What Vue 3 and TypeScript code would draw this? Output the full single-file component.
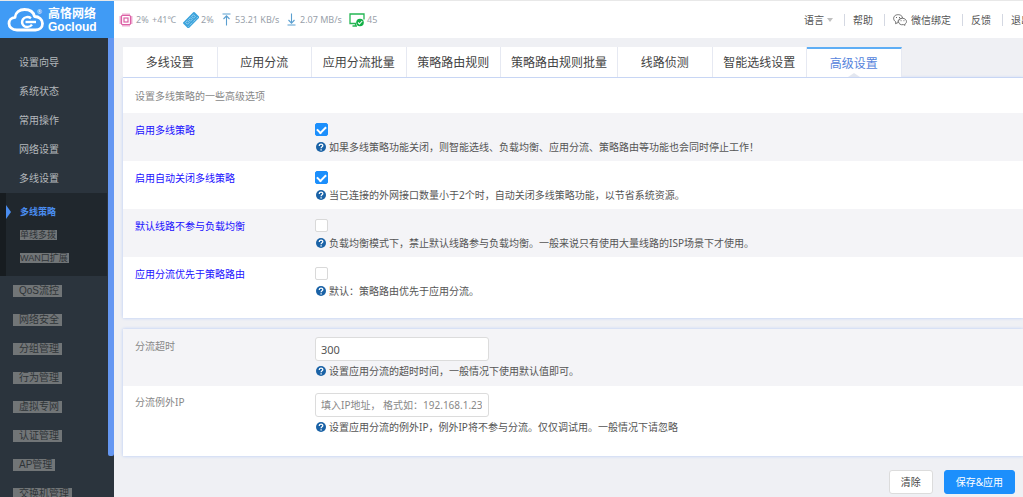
<script setup lang="ts">
import { ref } from 'vue'

interface Toggle {
  id: string
  label: string
  help: string
  on: boolean
}

const topMenu: string[] = ['设置向导', '系统状态', '常用操作', '网络设置', '多线设置']
const subMenu: string[] = ['多线策略', '单线多拨', 'WAN口扩展']
const restMenu: string[] = ['QoS流控', '网络安全', '分组管理', '行为管理', '虚拟专网', '认证管理', 'AP管理', '交换机管理']
const tabs: string[] = ['多线设置', '应用分流', '应用分流批量', '策略路由规则', '策略路由规则批量', '线路侦测', '智能选线设置', '高级设置']
const activeTab = ref('高级设置')

const toggles = ref<Toggle[]>([
  { id: 'enable', label: '启用多线策略', help: '如果多线策略功能关闭，则智能选线、负载均衡、应用分流、策略路由等功能也会同时停止工作！', on: true },
  { id: 'auto-off', label: '启用自动关闭多线策略', help: '当已连接的外网接口数量小于2个时，自动关闭多线策略功能，以节省系统资源。', on: true },
  { id: 'no-default', label: '默认线路不参与负载均衡', help: '负载均衡模式下，禁止默认线路参与负载均衡。一般来说只有使用大量线路的ISP场景下才使用。', on: false },
  { id: 'prefer-app', label: '应用分流优先于策略路由', help: '默认：策略路由优先于应用分流。', on: false },
])
const timeout = ref('300')
const exceptIp = ref('')
</script>

<template>
  <div class="page">
    <aside class="side">
      <a class="brand" href="#">
        <svg class="brand-mark" viewBox="0 0 38 26" aria-hidden="true">
          <path d="M10 23C5 23 2 20 2 16.500C2 13 4.500 10.500 8 10.300C8.500 5.500 12.500 2.500 17.500 2.500C22.500 2.500 26.500 5 27.500 9.500C32 9.500 35.500 12.500 35.500 16.500C35.500 20.500 32.500 23 28.500 23Z" fill="none" stroke="#fff" stroke-width="2.800" stroke-linejoin="round" />
          <path d="M24 11.300C21.500 9.300 17.500 9.800 15.800 12.500C13.800 15.900 16.300 20 20.300 20C22.600 20 24 19 25 17.600" fill="none" stroke="#fff" stroke-width="2.400" />
          <path d="M18.500 15H29" stroke="#fff" stroke-width="2.400" />
        </svg>
        <span class="reg">®</span>
        <span class="brand-text"><span class="brand-cn">高恪网络</span><span class="brand-en">Gocloud</span></span>
      </a>
      <div class="side-body">
        <nav class="menu">
          <ul>
            <li v-for="m in topMenu" :key="m" class="item"><a href="#">{{ m }}</a></li>
          </ul>
          <ul class="sub">
            <li v-for="(m, i) in subMenu" :key="m" :class="{ current: i === 0, marked: i > 0 }"><a href="#">{{ m }}</a></li>
          </ul>
          <ul>
            <li v-for="m in restMenu" :key="m" class="item marked"><a href="#">{{ m }}</a></li>
          </ul>
        </nav>
        <div class="scroll"></div>
      </div>
    </aside>

    <div class="main">
      <header class="top">
        <div class="stats">
          <svg class="chip" viewBox="0 0 14 14" aria-hidden="true">
            <g fill="none" stroke="#dc5fa5">
              <rect x="2.500" y="2.500" width="9" height="9" rx="1" stroke-width="1.200" />
              <rect x="5" y="5" width="4" height="4" stroke-width="1.200" />
              <path d="M4 0.500V2M6 0.500V2M8 0.500V2M10 0.500V2M4 12V13.500M6 12V13.500M8 12V13.500M10 12V13.500M0.500 4H2M0.500 6H2M0.500 8H2M0.500 10H2M12 4H13.500M12 6H13.500M12 8H13.500M12 10H13.500" />
            </g>
          </svg>
          <span class="stat pct">2%</span>
          <span class="stat temp">+41℃</span>
          <svg class="ram" viewBox="0 0 16 16" aria-hidden="true">
            <g transform="rotate(-45 8 8)">
              <rect x="0" y="4.200" width="16" height="8" rx="1" fill="#3ba3dc" />
              <path d="M2.500 6H5V8.500H2.500ZM6.700 6H9.200V8.500H6.700ZM11 6H13.500V8.500H11Z" fill="none" stroke="#c7e6f7" stroke-width="0.600" />
              <path d="M1.500 10.700H14.500" stroke="#c7e6f7" stroke-width="0.900" stroke-dasharray="1 1" />
            </g>
          </svg>
          <span class="stat mem">2%</span>
          <svg class="arrow" viewBox="0 0 9 13" aria-hidden="true"><path d="M0.500 1H8.500M4.500 12.500V3M1.500 6L4.500 2.800L7.500 6" fill="none" stroke="#5b9fd0" stroke-width="1.100" /></svg>
          <span class="stat up">53.21 KB/s</span>
          <svg class="arrow" viewBox="0 0 9 13" aria-hidden="true"><path d="M0.500 12H8.500M4.500 0.500V10M1.500 7L4.500 10.200L7.500 7" fill="none" stroke="#5b9fd0" stroke-width="1.100" /></svg>
          <span class="stat down">2.07 MB/s</span>
          <svg class="screen" viewBox="0 0 16 14" aria-hidden="true">
            <path d="M7 10.500H1V1H15V6.500M6.500 10.500V13M3.500 13H8" fill="none" stroke="#25b653" stroke-width="1.300" />
            <circle cx="11" cy="9.500" r="3.800" fill="#12b046" />
            <path d="M9 9.500L10.500 11L13.200 8" fill="none" stroke="#fff" stroke-width="1.100" />
          </svg>
          <span class="stat">45</span>
        </div>
        <nav class="links">
          <a href="#">语言<i class="caret"></i></a>
          <a href="#">帮助</a>
          <a href="#">
            <svg class="wechat" viewBox="0 0 14 12" aria-hidden="true">
              <path d="M5.200 8.500L2.500 9.700L2.900 8C-0.300 6 0 2 3.200 1C6 0 9.300 1.200 9.700 4.200C6.800 4 4.500 6 5.200 8.500Z" fill="none" stroke="#666" stroke-width="0.900" />
              <path d="M11.800 10L12 11.300L10.400 10.600C7.800 11.300 5.500 9.700 5.500 7.700C5.500 5.500 7.400 4.300 9.500 4.300C11.600 4.300 13.500 5.700 13.500 7.700C13.500 8.700 12.800 9.500 11.800 10Z" fill="#fff" stroke="#666" stroke-width="0.900" />
              <path d="M3 3.500H4M6 3.500H7M7.600 6.700H8.500M10.500 6.700H11.400" stroke="#666" />
            </svg>微信绑定</a>
          <a href="#">反馈</a>
          <a href="#">退出</a>
        </nav>
      </header>

      <div class="content">
        <div class="tabs" role="tablist">
          <button v-for="t in tabs" :key="t" type="button" role="tab" class="tab" :class="{ active: t === activeTab, wide: t.length > 6 }" :aria-selected="t === activeTab" @click="activeTab = t">{{ t }}</button>
        </div>

        <section class="panel first">
          <p class="intro">设置多线策略的一些高级选项</p>
          <div v-for="t in toggles" :key="t.id" class="row">
            <label class="name strong" :for="t.id">{{ t.label }}</label>
            <div class="field">
              <input :id="t.id" v-model="t.on" class="check" type="checkbox" />
              <p class="help">
                <svg class="q" viewBox="0 0 10 10" aria-hidden="true"><circle cx="5" cy="5" r="5" fill="#1a62a6" /><path d="M3.200 4C3.200 1.500 6.800 1.600 6.800 3.700C6.800 4.900 5.100 4.800 5.100 6.300M5.100 7.200V8.500" fill="none" stroke="#fff" stroke-width="1.300" /></svg>{{ t.help }}
              </p>
            </div>
          </div>
        </section>

        <section class="panel second">
          <div class="row">
            <label class="name" for="timeout">分流超时</label>
            <div class="field">
              <input id="timeout" v-model="timeout" class="text value" type="text" />
              <p class="help">
                <svg class="q" viewBox="0 0 10 10" aria-hidden="true"><circle cx="5" cy="5" r="5" fill="#1a62a6" /><path d="M3.200 4C3.200 1.500 6.800 1.600 6.800 3.700C6.800 4.900 5.100 4.800 5.100 6.300M5.100 7.200V8.500" fill="none" stroke="#fff" stroke-width="1.300" /></svg>设置应用分流的超时时间，一般情况下使用默认值即可。
              </p>
            </div>
          </div>
          <div class="row">
            <label class="name" for="except">分流例外IP</label>
            <div class="field">
              <input id="except" v-model="exceptIp" class="text" type="text" placeholder="填入IP地址， 格式如：192.168.1.234" />
              <p class="help">
                <svg class="q" viewBox="0 0 10 10" aria-hidden="true"><circle cx="5" cy="5" r="5" fill="#1a62a6" /><path d="M3.200 4C3.200 1.500 6.800 1.600 6.800 3.700C6.800 4.900 5.100 4.800 5.100 6.300M5.100 7.200V8.500" fill="none" stroke="#fff" stroke-width="1.300" /></svg>设置应用分流的例外IP，例外IP将不参与分流。仅仅调试用。一般情况下请忽略
              </p>
            </div>
          </div>
        </section>

        <div class="actions">
          <button type="button" class="btn">清除</button>
          <button type="button" class="btn primary">保存&amp;应用</button>
        </div>
      </div>
    </div>
  </div>
</template>

<style>
body {
  background: #eff0f4;
}
</style>

<style scoped>
* {
  box-sizing: border-box;
}
.page {
  display: flex;
  height: 100vh;
  overflow: hidden;
  border-top: 1px solid #e8e8e8;
  font: 10px/14px "Noto Sans", "Noto Sans CJK SC", sans-serif;
  color: #555;
}
ul,
p {
  margin: 0;
  padding: 0;
  list-style: none;
}
a {
  color: inherit;
  text-decoration: none;
}
.side {
  flex: none;
  width: 114px;
  display: flex;
  flex-direction: column;
  background: #2b343d;
}
.brand {
  flex: none;
  display: flex;
  height: 37px;
  padding: 6px 0 0 7px;
  background: #409bf5;
  color: #fff;
}
.brand-mark {
  width: 38px;
  height: 26px;
}
.reg {
  margin-left: -8px;
  width: 11px;
  font-size: 6px;
  line-height: 10px;
}
.brand-text {
  display: flex;
  flex-direction: column;
  font-weight: 700;
}
.brand-cn {
  font-size: 12px;
  line-height: 14px;
}
.brand-en {
  font-family: "Liberation Sans", Arial, sans-serif;
  font-size: 12px;
  line-height: 12px;
}
.side-body {
  flex: 1;
  display: flex;
  min-height: 0;
}
.menu {
  flex: 1;
  padding-top: 10px;
  overflow: hidden;
  font-family: "Liberation Sans", "Noto Sans CJK SC", sans-serif;
  color: #b4b8bc;
}
.scroll {
  width: 6px;
  height: 418px;
  background: #6597f2;
  border-radius: 0 0 2px 2px;
}
.item {
  display: flex;
  align-items: center;
  height: 29px;
  padding-left: 13px;
}
.item a {
  padding: 0 3px 0 6px;
  line-height: 12px;
}
.marked a {
  background: #717577;
  color: #2f3437;
}
.sub {
  margin-right: 1px;
  padding: 7px 0 7px;
  border-left: 6px solid #171c20;
  background: #20272d;
  font-size: 9px;
}
.sub li {
  display: flex;
  align-items: center;
  height: 23px;
  padding-left: 14px;
}
.sub a {
  padding-right: 1px;
  line-height: 10px;
}
.sub .current {
  padding-left: 0;
  color: #4a8df0;
  font-weight: 700;
}
.current::before {
  content: "";
  margin-right: 9px;
  border: solid transparent;
  border-width: 7px 0 7px 5px;
  border-left-color: #4a8df0;
}
.main {
  flex: 1;
  min-width: 0;
  display: flex;
  flex-direction: column;
  background: #eff0f4;
}
.top {
  flex: none;
  display: flex;
  align-items: center;
  height: 37px;
  padding-left: 5px;
  background: #fff;
  overflow: hidden;
}
.stats {
  flex: none;
  display: flex;
  align-items: center;
  font-size: 9px;
  color: #999faa;
}
.stat {
  flex: none;
  white-space: nowrap;
}
.chip {
  width: 14px;
  height: 14px;
  margin-right: 3px;
}
.pct {
  width: 16px;
}
.temp {
  width: 31px;
}
.ram {
  width: 16px;
  height: 16px;
  margin-right: 2px;
}
.mem {
  width: 21px;
}
.arrow {
  width: 9px;
  height: 13px;
  margin-right: 4px;
}
.up {
  width: 52px;
}
.down {
  width: 49px;
}
.screen {
  width: 16px;
  height: 14px;
  margin-right: 2px;
}
.links {
  flex: none;
  display: flex;
  margin: 0 -8px 0 auto;
}
.links a {
  display: flex;
  align-items: center;
  height: 12px;
}
.links a + a {
  margin-left: 11px;
  padding-left: 8px;
  border-left: 1px solid #d4d8e2;
}
.caret {
  margin-left: 3px;
  border: solid transparent;
  border-width: 4px 3px 0;
  border-top-color: #c0c0c0;
}
.wechat {
  width: 14px;
  height: 12px;
  margin-right: 4px;
}
.content {
  flex: 1;
  padding: 9px 0 0 9px;
}
.tabs {
  display: flex;
  height: 31px;
  border-bottom: 1px solid #d5dff2;
}
.tab {
  flex: 0 0 auto;
  width: 10.5%;
  padding: 2px 0 0;
  border: 0;
  border-right: 1px solid #e6e9f2;
  background: #fff;
  font: inherit;
  font-size: 12px;
  color: #444;
  white-space: nowrap;
}
.tab.wide {
  width: 13%;
}
.tab.active {
  display: flex;
  flex-direction: column;
  align-items: center;
  justify-content: space-between;
  border-top: 2px solid #5eaef5;
  color: #5583dc;
  line-height: 18px;
  padding-top: 6px;
}
.tab.active::after {
  content: "";
  border: solid transparent;
  border-width: 0 6px 4px;
  border-bottom-color: #e3e7f0;
}
.panel {
  background: #fff;
  box-shadow: 0 0 3px #b4c9f7;
}
.first {
  padding-bottom: 13px;
}
.intro {
  height: 35px;
  padding: 11px 12px;
  color: #888;
}
.row {
  display: flex;
  min-height: 48px;
  padding: 10px 12px 0;
}
.row:nth-of-type(odd) {
  background: #f4f4f7;
}
.name {
  flex: none;
  width: 180px;
  color: #888;
}
.strong {
  color: #1a10ff;
}
.field {
  flex: 1;
  min-width: 0;
}
.check {
  appearance: none;
  display: grid;
  place-items: center;
  width: 13px;
  height: 13px;
  margin: 0 0 4px;
  border: 1px solid #d9d9d9;
  border-radius: 2px;
  background: #fff;
}
.check:checked {
  border-color: #1c8ffc;
  background: #1c8ffc;
}
.check:checked::after {
  content: "";
  width: 7px;
  height: 4px;
  margin-bottom: 2px;
  border: solid #fff;
  border-width: 0 0 2px 2px;
  rotate: -45deg;
}
.help {
  display: flex;
  align-items: center;
  white-space: nowrap;
}
.q {
  flex: none;
  width: 10px;
  height: 10px;
  margin: 0 3px 0 1px;
}
.second {
  margin-top: 11px;
}
.second .row {
  min-height: 57px;
  padding-top: 8px;
}
.second .row:last-child {
  min-height: 70px;
  padding-top: 7px;
}
.second .name {
  padding-top: 2px;
}
.text {
  display: block;
  width: 174px;
  height: 24px;
  margin-bottom: 3px;
  padding: 0 6px 0 5px;
  border: 1px solid #dcdcdc;
  border-radius: 3px;
  background: #fff;
  font: inherit;
  color: #555;
}
.value {
  font-size: 11px;
}
.text::placeholder {
  color: #888;
}
.actions {
  display: flex;
  justify-content: flex-end;
  gap: 11px;
  padding: 14px 8px 0 0;
}
.btn {
  height: 24px;
  padding: 0 11px;
  border: 1px solid #dcdcdc;
  border-radius: 3px;
  background: #fff;
  font: inherit;
  color: #444;
}
.primary {
  border-color: #1c8ffc;
  background: #1c8ffc;
  color: #fff;
}
</style>
